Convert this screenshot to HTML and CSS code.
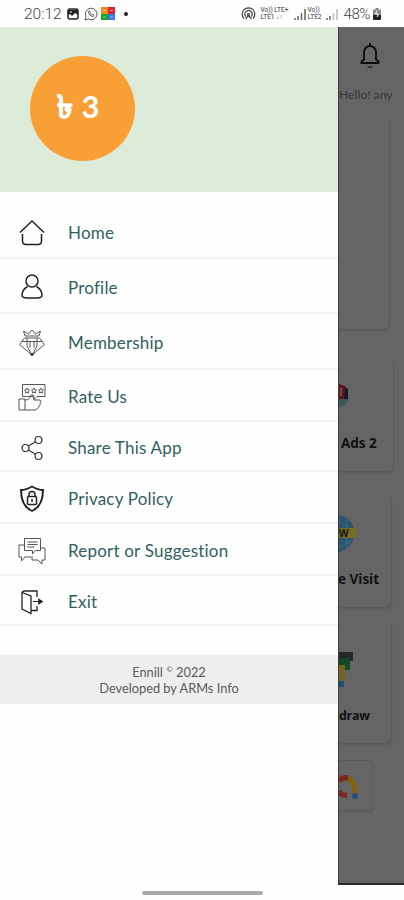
FILE: index.html
```
<!DOCTYPE html>
<html lang="en">
<head>
<meta charset="utf-8">
<meta name="viewport" content="width=device-width, initial-scale=1">
<title>Ennill</title>
<link rel="stylesheet" href="styles.css">
</head>
<body>
<header class="status">
  <span class="clock">20:12</span>
  <svg class="s-photo" width="12" height="12" viewBox="0 0 12 12"><rect x="1" y="1" width="10" height="10" rx="2" fill="none" stroke="#222" stroke-width="1.500"/><path d="M1 2h10v5L8 5 5 8 3 6 1 7z" fill="#222"/><path d="M3 4h2" stroke="#fff"/></svg>
  <svg class="s-chat" width="14" height="14" viewBox="0 0 14 14" fill="none" stroke="#555"><path d="M1 13l1-3.500A5.800 5.800 0 1 1 4.300 12z"/><path d="M4.500 4.500c0 3 2 5 5 5l.5-1.500-1.700-.8-.8.7-1.700-1.700.7-.9-.8-1.500z" stroke-width=".9"/></svg>
  <svg class="s-tiles" width="14" height="14" viewBox="0 0 14 14"><path fill="#f28a1c" d="M0 0h7v7H0z"/><path fill="#d72632" d="M7 0h7v7H7z"/><path fill="#17a02c" d="M0 7h7v6H0z"/><path fill="#3978e8" d="M7 7h7v6H7z"/><path d="M2 3.500h3M9 3.500h3M2 10h3M9 10h3" stroke="#fff" opacity=".5"/></svg>
  <span class="dot"></span>
  <span class="grow"></span>
  <svg class="s-hotspot" width="15" height="14" viewBox="0 0 15 14" fill="none" stroke="#444" stroke-width="1.200"><path d="M3 11.500a6.300 6.300 0 1 1 9 0M4.700 9.500a3.600 3.600 0 1 1 5.600 0"/><circle cx="7.500" cy="7.500" r="1"/><path d="M7.500 8.500l-3 3.500M7.500 8.500l3 3.500"/></svg>
  <span class="lte"><b>Vo)) LTE+</b><b>LTE1 ↓↑</b></span>
  <svg class="s-sig" width="12" height="11" viewBox="0 0 12 11" stroke="#666" stroke-width="1.500"><path d="M1 11V9M4 11V7M7.500 11V4M11 11V0"/></svg>
  <span class="lte lte2"><b>Vo))</b><b>LTE2</b></span>
  <svg class="s-sig" width="12" height="11" viewBox="0 0 12 11" stroke="#666" stroke-width="1.500"><path d="M1 11V9M4 11V7"/><path d="M7.500 11V4M11 11V0" stroke="#bbb"/></svg>
  <span class="battery">48%</span>
  <svg class="s-bat" width="8" height="12" viewBox="0 0 8 12"><path d="M2.500 0h3v1.500H7q1 0 1 1V11q0 1-1 1H1q-1 0-1-1V2.500q0-1 1-1h1.500z" fill="#888"/><path d="M0 7h8v4q0 1-1 1H1q-1 0-1-1z" fill="#222"/><path d="M4 2.500L2.500 6h3L4 9" fill="none" stroke="#fff"/></svg>
</header>

<div class="screen">
  <aside class="drawer">
    <section class="hero"><div class="balance"><span class="taka">৳</span><span>3</span></div></section>
    <nav class="menu">
      <a class="item home"><svg class="icon" viewBox="0 0 28 28"><path d="M2 13.500L14 2l12 11.500M4.500 15v7q0 3.500 3.500 3.500h12q3.500 0 3.500-3.500v-7"/></svg><span>Home</span></a>
      <a class="item profile"><svg class="icon" viewBox="0 0 28 28"><circle cx="14" cy="8" r="6"/><path d="M9.500 13.500Q4 17 4 22q0 3 5 3h10q5 0 5-3 0-5-5.500-8.500"/></svg><span>Profile</span></a>
      <a class="item member"><svg class="icon fine" viewBox="0 0 28 28"><path d="M7 7L5.500 2l5 3L14 1l3.500 4 5-3L21 7zM6.500 9h15l5 6.500L14 26 1.500 15.500zM4 12.500h20M9 9v8l5 9 5-9V9M12 12.500v6M16 12.500v6"/><path d="M12 24.500h4L14 27z" fill="#222"/></svg><span>Membership</span></a>
      <a class="item rate"><svg class="icon fine" viewBox="0 0 28 28"><path d="M4.500 1.500H27v12h-8l-3 3-1-3H4.500zM1 16h6v11H1zM7 17q5 0 6-5 3-1 3 2v3h6q2 1 0 3 1 2-1 3 0 2-1.500 2Q19 27 17 27H7"/><path d="M9 5l.8 1.700 1.700.3-1.200 1.200.3 1.800L9 9.100 7.400 10l.3-1.800L6.500 7l1.700-.3zM16 5l.8 1.700 1.700.3-1.200 1.200.3 1.800-1.600-.9-1.600.9.3-1.800L13.500 7l1.700-.3zM23 5l.8 1.700 1.700.3-1.200 1.200.3 1.800-1.600-.9-1.600.9.3-1.800L20.500 7l1.700-.3z"/></svg><span>Rate Us</span></a>
      <a class="item share"><svg class="icon medium" viewBox="0 0 28 28"><circle cx="7.500" cy="14" r="3.500"/><circle cx="20.500" cy="6" r="3.500"/><circle cx="20.500" cy="22" r="3.500"/><path d="M10.500 12l7-4.200M10.500 16l7 4.200"/></svg><span>Share This App</span></a>
      <a class="item privacy"><svg class="icon" viewBox="0 0 28 28"><path d="M14 1.500Q20 5 25 5q0 16-11 21Q3 21 3 5q5 0 11-3.500z" stroke-width="1.900"/><rect x="9.500" y="11.500" width="9" height="8" rx="1"/><path d="M11 11.500V9.500a3 3 0 0 1 6 0v2M14 14v3"/></svg><span>Privacy Policy</span></a>
      <a class="item report"><svg class="icon fine" viewBox="0 0 28 28"><path d="M6.500 1.500h16v12h-5L14.500 17v-3.500h-8zM9.500 5h10M9.500 7.500h10M9.500 10h7M6.500 8H1v12h2.500v4L7 20h6M22.500 11H27v12h-3v4l-4-4h-6v-4"/></svg><span>Report or Suggestion</span></a>
      <a class="item exit"><svg class="icon" viewBox="0 0 28 28"><path d="M4 4.500l9 3.500v17.500L4 21zM4 4.500L6 3h13v6M13 22.500h6V18" stroke-width="1.300"/><path d="M15 13.500h7" stroke-width="1"/><path d="M21 11.500l3 2-3 2z" fill="#222"/></svg><span>Exit</span></a>
    </nav>
    <footer class="credit"><span>Ennill <sup>©</sup> 2022</span><span class="dev">Developed by ARMs Info</span></footer>
  </aside>

  <main class="page">
    <svg class="bell" width="20" height="28" viewBox="0 0 20 28" fill="none" stroke="#0c0c0c" stroke-width="1.800"><path d="M10 1v3M1.500 21v-1.500L4 17.500V10a6 6 0 0 1 12 0v7.500l2.500 2V21z"/><path d="M7.500 25h5" stroke="#333"/></svg>
    <p class="hello">Hello! any</p>
    <section class="card banner"></section>
    <section class="card ads">
      <svg width="14" height="28" viewBox="0 0 14 28"><path d="M0 2l7 3 3 11-3 6-7 4z" fill="#3f5659"/><path d="M0 2l6 2 1 13H0z" fill="#641025"/><path d="M6 5l3 2v10H5z" fill="#151923"/><path d="M2 6v8" stroke="#75502a" stroke-width="2"/></svg>
      <h2>Ads 2</h2>
    </section>
    <section class="card visit">
      <svg width="20" height="40" viewBox="0 0 20 40"><path d="M0 1q14 3 16 18Q14 34 0 38z" fill="#2b566e"/><path d="M0 7l8 6M8 6v28M0 33l12-6" stroke="#3c7082"/><path d="M0 14h16q4 5 0 10H0z" fill="#736e29"/><text x="0" y="22.500" class="www">W</text></svg>
      <h2>e Visit</h2>
    </section>
    <section class="card draw">
      <svg width="16" height="38" viewBox="0 0 16 38"><path d="M0 0h14v9H0z" fill="#252729"/><path d="M0 6h11v12H0z" fill="#104a26"/><path d="M0 13h6v16H0z" fill="#756222"/><path d="M0 29h5v6H0z" fill="#194f70"/></svg>
      <h2>draw</h2>
    </section>
    <section class="card admob">
      <svg width="20" height="26" viewBox="0 0 20 26" fill="none" stroke-width="5.500"><path d="M7 4q9 1 9 17" stroke="#80620f"/><path d="M0 7q3-4 9-3" stroke="#7b2822"/><path d="M0 17q2 5 8 4" stroke="#7b2822" stroke-width="5"/><circle cx="16" cy="22" r="3" fill="#294d85" stroke="none"/></svg>
    </section>
  </main>
</div>
<div class="gesture"><span></span></div>
</body>
</html>
```
FILE: styles.css
```
* { box-sizing: border-box; }
body {
  margin: 0;
  width: 404px;
  height: 900px;
  overflow: hidden;
  background: #fefefe;
  font-family: Lato, "Liberation Sans", sans-serif;
}
.status {
  height: 27px;
  padding: 0 23px 0 24px;
  display: flex;
  align-items: center;
  color: #666;
}
.clock { width: 43px; font: 300 15.500px Roboto, sans-serif; color: #444; }
.s-chat { margin-left: 5px; }
.s-tiles { margin-left: 3px; }
.dot { width: 4px; height: 4px; margin-left: 9px; border-radius: 50%; background: #222; }
.grow { flex: 1; }
.lte {
  width: 31px;
  margin: 0 3px 0 4px;
  display: flex;
  flex-direction: column;
  font: 6.500px/7px Roboto, sans-serif;
  white-space: nowrap;
}
.lte b { font-weight: 500; }
.lte2 { width: 16px; margin: 0 3px 0 1px; }
.s-sig { margin-top: 1px; }
.battery { margin: 0 3px 0 5px; font: 300 15px Roboto, sans-serif; color: #444; letter-spacing: -.4px; }
.screen { display: flex; height: 858px; }
.drawer { width: 338px; background: #fefefe; }
.hero { height: 165px; padding: 29px 30px; background: #ddebd9; }
.balance {
  width: 105px;
  height: 105px;
  padding: 0 9px 5px 0;
  display: flex;
  align-items: center;
  justify-content: center;
  gap: 9px;
  border-radius: 50%;
  background: #f8a035;
  color: #fff;
  font: 700 31px/1 Lato, sans-serif;
}
.taka { font-size: 32px; -webkit-text-stroke: .8px #fff; }
.menu { padding-top: 13px; }
.item {
  display: flex;
  align-items: center;
  padding: 3px 0 0 18px;
  gap: 22px;
  border-bottom: 2px solid #f1f2f2;
  color: #316062;
  font-size: 17px;
  line-height: 20px;
  letter-spacing: .2px;
}
.item span { padding-top: 1px; }
.icon { width: 28px; height: 28px; fill: none; stroke: #222; stroke-width: 1.500; }
.medium { stroke: #333; stroke-width: 1.200; }
.fine { stroke: #555; stroke-width: 1; }
.home { height: 54px; }
.profile { height: 55px; }
.member { height: 56px; }
.rate { height: 52px; }
.share { height: 50px; }
.privacy { height: 52px; }
.report { height: 52px; }
.exit { height: 50px; }
.credit {
  height: 49px;
  margin-top: 29px;
  padding-top: 9px;
  display: flex;
  flex-direction: column;
  align-items: center;
  background: #eee;
  color: #5a5a5a;
  font-size: 12.800px;
  line-height: 16px;
}
.credit sup { font-size: 8px; line-height: 0; }
.page {
  width: 66px;
  overflow: hidden;
  display: flex;
  flex-direction: column;
  align-items: flex-start;
  background: #656565;
  border-left: 1px solid #3d3d3d;
  border-bottom: 2px solid #292929;
}
.bell { flex: none; margin: 15px 0 0 21px; }
.hello { margin: 16px 0 0; font-size: 12.200px; line-height: 18px; color: #363636; white-space: nowrap; }
.card {
  flex: none;
  width: 55px;
  border: solid #5a5a5a;
  border-width: 0 1px 1px 0;
  border-bottom-right-radius: 6px;
  box-shadow: 0 1px 2px #5858588c;
}
.card svg { display: block; }
.card h2 { margin: 0; font: 700 13.500px/16px "Open Sans", sans-serif; color: #111; white-space: nowrap; }
.banner { width: 51px; height: 210px; margin-top: 16px; }
.ads { height: 110px; margin-top: 32px; padding-top: 20px; }
.ads h2 { margin: 25px 0 0 2px; }
.visit { width: 53px; height: 109px; margin-top: 27px; padding-top: 15px; }
.visit h2 { margin: 17px 0 0 -1px; }
.www { font: 700 10px "Open Sans", sans-serif; fill: #171a12; }
.draw { width: 53px; height: 118px; margin-top: 18px; padding-top: 26px; }
.draw h2 { margin: 18px 0 0; font-size: 12.500px; letter-spacing: -.3px; }
.admob { width: 33px; height: 51px; margin-top: 16px; padding-top: 13px; border-top-width: 1px; border-radius: 0; }
.gesture { height: 15px; display: flex; justify-content: center; padding: 6px 0 0 1px; }
.gesture span { width: 121px; height: 4px; border-radius: 2px; background: #aaa; }
```
